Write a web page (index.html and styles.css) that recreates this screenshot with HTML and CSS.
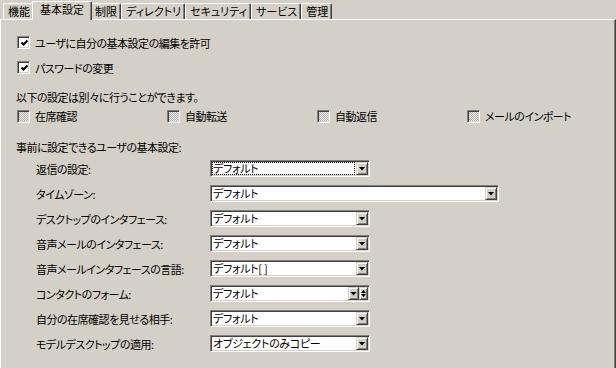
FILE: index.html
```html
<!DOCTYPE html>
<html lang="ja">
<head>
<meta charset="utf-8">
<title>基本設定</title>
<link rel="stylesheet" href="styles.css">
</head>
<body>
<div class="tabs">
  <div class="tab">機能</div>
  <div class="tab active">基本設定</div>
  <div class="tab">制限</div>
  <div class="tab">ディレクトリ</div>
  <div class="tab">セキュリティ</div>
  <div class="tab">サービス</div>
  <div class="tab">管理</div>
</div>
<div class="panel">
  <div class="check-row"><span class="cb"><svg class="tick" width="9" height="9" viewBox="0 0 9 9"><path d="M1.5 3.5 L3.5 5.5 L7.5 1.5" fill="none" stroke="#000" stroke-width="2"/></svg></span><span>ユーザに自分の基本設定の編集を許可</span></div>
  <div class="check-row"><span class="cb"><svg class="tick" width="9" height="9" viewBox="0 0 9 9"><path d="M1.5 3.5 L3.5 5.5 L7.5 1.5" fill="none" stroke="#000" stroke-width="2"/></svg></span><span>パスワードの変更</span></div>
  <div class="note">以下の設定は別々に行うことができます。</div>
  <div class="mixed-row">
    <div class="mixed"><span class="cb cb-mixed"></span><span>在席確認</span></div>
    <div class="mixed"><span class="cb cb-mixed"></span><span>自動転送</span></div>
    <div class="mixed"><span class="cb cb-mixed"></span><span>自動返信</span></div>
    <div class="mixed"><span class="cb cb-mixed"></span><span>メールのインポート</span></div>
  </div>
  <div class="heading">事前に設定できるユーザの基本設定:</div>
  <div class="form">
    <div class="frow"><span class="flabel">返信の設定:</span><div class="select"><span class="val focus">デフォルト</span><span class="btn"><span class="arrow"></span></span></div></div>
    <div class="frow"><span class="flabel">タイムゾーン:</span><div class="select wide"><span class="val">デフォルト</span><span class="btn"><span class="arrow"></span></span></div></div>
    <div class="frow"><span class="flabel">デスクトップのインタフェース:</span><div class="select"><span class="val">デフォルト</span><span class="btn"><span class="arrow"></span></span></div></div>
    <div class="frow"><span class="flabel">音声メールのインタフェース:</span><div class="select"><span class="val">デフォルト</span><span class="btn"><span class="arrow"></span></span></div></div>
    <div class="frow"><span class="flabel">音声メールインタフェースの言語:</span><div class="select"><span class="val">デフォルト[ ]</span><span class="btn"><span class="arrow"></span></span></div></div>
    <div class="frow"><span class="flabel">コンタクトのフォーム:</span><div class="select"><span class="val">デフォルト</span><span class="btn narrow"><span class="arrow"></span></span><span class="btn spin"><span class="up"></span><span class="down"></span></span></div></div>
    <div class="frow"><span class="flabel">自分の在席確認を見せる相手:</span><div class="select"><span class="val">デフォルト</span><span class="btn"><span class="arrow"></span></span></div></div>
    <div class="frow"><span class="flabel">モデルデスクトップの適用:</span><div class="select"><span class="val">オブジェクトのみコピー</span><span class="btn"><span class="arrow"></span></span></div></div>
  </div>
</div>
</body>
</html>
```
FILE: styles.css
```css
html, body {
  margin: 0;
  padding: 0;
}
body {
  background: #d4d0c8;
  color: #000;
  font-family: "Noto Sans CJK JP", "Liberation Sans", sans-serif;
  font-size: 11px;
  font-feature-settings: "palt";
  letter-spacing: -0.5px;
  width: 616px;
  height: 368px;
  overflow: hidden;
}

/* tabs */
.tabs {
  display: flex;
  align-items: flex-end;
  height: 19px;
  padding-left: 3px;
  letter-spacing: 0;
}
.tab {
  box-sizing: border-box;
  height: 16px;
  padding: 0 3px 0 4px;
  line-height: 14px;
  border-top: 1px solid #fff;
  border-left: 1px solid #fff;
  border-right: 1px solid #404040;
  box-shadow: inset -1px 0 #808080;
  border-radius: 2px 2px 0 0;
  white-space: nowrap;
  background: #d4d0c8;
}
.tab.active {
  position: relative;
  z-index: 1;
  height: 19px;
  margin: 0 -2px -1px;
  padding: 0 7px 2px 7px;
  line-height: 15px;
}

/* panel */
.panel {
  box-sizing: border-box;
  height: 380px;
  border-top: 1px solid #fff;
  border-left: 1px solid #fff;
  border-right: 1px solid #404040;
  box-shadow: inset -1px 0 #808080;
  padding: 10px 0 0 15px;
}

.check-row {
  display: flex;
  align-items: center;
  gap: 5px;
  height: 25px;
  padding-left: 1px;
}

.cb {
  box-sizing: border-box;
  width: 13px;
  height: 13px;
  flex: none;
  display: flex;
  align-items: center;
  justify-content: center;
  background: #fff;
  border-top: 1px solid #808080;
  border-left: 1px solid #808080;
  border-right: 1px solid #fff;
  border-bottom: 1px solid #fff;
  box-shadow: inset 1px 1px #404040, inset -1px -1px #d4d0c8;
}
.tick {
  display: block;
  margin: 1px 0 0 1px;
}
.cb-mixed {
  background-color: #fff;
  background-image: repeating-conic-gradient(#a8a59f 0 25%, #fff 0 50%);
  background-size: 2px 2px;
}

.note {
  margin-top: 8px;
  height: 18px;
  line-height: 18px;
}

.mixed-row {
  display: grid;
  grid-template-columns: repeat(4, 150px);
  height: 20px;
  padding-left: 1px;
}
.mixed {
  display: flex;
  align-items: center;
  gap: 5px;
}

.heading {
  margin-top: 12px;
  height: 18px;
  line-height: 18px;
}

.form {
  padding-left: 20px;
}
.frow {
  display: flex;
  align-items: center;
  height: 25px;
}
.flabel {
  width: 174px;
  flex: none;
  white-space: nowrap;
}

.select {
  box-sizing: border-box;
  width: 160px;
  height: 17px;
  display: flex;
  align-items: stretch;
  background: #fff;
  border-top: 1px solid #808080;
  border-left: 1px solid #808080;
  border-right: 1px solid #fff;
  border-bottom: 1px solid #fff;
  box-shadow: inset 1px 1px #404040, inset -1px -1px #d4d0c8;
  padding: 1px;
  letter-spacing: -0.3px;
}
.select.wide {
  width: 289px;
}
.val {
  flex: 1;
  min-width: 0;
  padding-left: 1px;
  line-height: 12px;
  white-space: nowrap;
  margin: 0 1px 0 0;
}
.val.focus {
  outline: 1px dotted #000;
  outline-offset: -1px;
}

.btn {
  box-sizing: border-box;
  width: 12px;
  flex: none;
  display: flex;
  align-items: center;
  justify-content: center;
  background: #d4d0c8;
  border-top: 1px solid #d4d0c8;
  border-left: 1px solid #d4d0c8;
  border-right: 1px solid #404040;
  border-bottom: 1px solid #404040;
  box-shadow: inset 1px 1px #fff, inset -1px -1px #808080;
}
.btn.narrow {
  width: 11px;
}
.arrow {
  width: 7px;
  height: 4px;
  background: #000;
  clip-path: polygon(0 0, 100% 0, 50% 100%);
}
.btn.spin {
  width: 9px;
  flex-direction: column;
  gap: 1px;
}
.up, .down {
  width: 5px;
  height: 3px;
  background: #000;
}
.up {
  clip-path: polygon(50% 0, 100% 100%, 0 100%);
}
.down {
  clip-path: polygon(0 0, 100% 0, 50% 100%);
}
```
